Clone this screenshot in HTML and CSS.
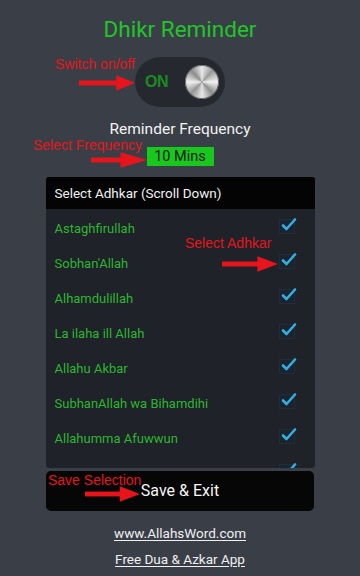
FILE: index.html
```html
<!DOCTYPE html>
<html>
<head>
<meta charset="utf-8">
<link rel="stylesheet" href="styles.css">
</head>
<body>
<div class="screen">
  <h1 class="title">Dhikr Reminder</h1>
  <div class="toggle">
    <span class="toggle-on">ON</span>
    <span class="knob"></span>
  </div>
  <div class="freq-label">Reminder Frequency</div>
  <div class="freq-value">10 Mins</div>
  <div class="panel">
    <div class="panel-head">Select Adhkar (Scroll Down)</div>
    <div class="list">
      <div class="row"><span>Astaghfirullah</span><i class="cb"><svg viewBox="0 0 18 18"><path d="M4 9.5 L7.5 13 L16 3.5"/></svg></i></div>
      <div class="row"><span>Sobhan'Allah</span><i class="cb"><svg viewBox="0 0 18 18"><path d="M4 9.5 L7.5 13 L16 3.5"/></svg></i></div>
      <div class="row"><span>Alhamdulillah</span><i class="cb"><svg viewBox="0 0 18 18"><path d="M4 9.5 L7.5 13 L16 3.5"/></svg></i></div>
      <div class="row"><span>La ilaha ill Allah</span><i class="cb"><svg viewBox="0 0 18 18"><path d="M4 9.5 L7.5 13 L16 3.5"/></svg></i></div>
      <div class="row"><span>Allahu Akbar</span><i class="cb"><svg viewBox="0 0 18 18"><path d="M4 9.5 L7.5 13 L16 3.5"/></svg></i></div>
      <div class="row"><span>SubhanAllah wa Bihamdihi</span><i class="cb"><svg viewBox="0 0 18 18"><path d="M4 9.5 L7.5 13 L16 3.5"/></svg></i></div>
      <div class="row"><span>Allahumma Afuwwun</span><i class="cb"><svg viewBox="0 0 18 18"><path d="M4 9.5 L7.5 13 L16 3.5"/></svg></i></div>
      <div class="row"><span>Allahumma Salli</span><i class="cb"><svg viewBox="0 0 18 18"><path d="M4 9.5 L7.5 13 L16 3.5"/></svg></i></div>
    </div>
  </div>
  <div class="save">Save &amp; Exit</div>
  <a class="link" href="#">www.AllahsWord.com</a>
  <a class="link link2" href="#">Free Dua &amp; Azkar App</a>

  <div class="note note1">Switch on/off</div>
  <svg class="arrow arrow1" viewBox="0 0 57 16"><rect x="0" y="5.5" width="40" height="5"/><polygon points="38,0 57,8 38,16"/></svg>
  <div class="note note2">Select Frequency</div>
  <svg class="arrow arrow2" viewBox="0 0 57 16"><rect x="0" y="5.5" width="32" height="5"/><polygon points="30,0 57,8 30,16"/></svg>
  <div class="note note3">Select Adhkar</div>
  <svg class="arrow arrow3" viewBox="0 0 57 16"><rect x="0" y="5.5" width="38" height="5"/><polygon points="36,0 57,8 36,16"/></svg>
  <div class="note note4">Save Selection</div>
  <svg class="arrow arrow4" viewBox="0 0 57 16"><rect x="0" y="5.5" width="38" height="5"/><polygon points="36,0 57,8 36,16"/></svg>
</div>
</body>
</html>
```
FILE: styles.css
```css
html, body {
  margin: 0;
  padding: 0;
  background: #3a3f47;
}
.screen {
  position: relative;
  width: 360px;
  height: 576px;
  overflow: hidden;
  display: flex;
  flex-direction: column;
  align-items: center;
  font-family: Roboto, "Liberation Sans", sans-serif;
}
.title {
  margin: 16px 0 0;
  font-size: 22.5px;
  font-weight: 400;
  line-height: 26px;
  color: #22c42a;
}
.toggle {
  margin-top: 15px;
  width: 90px;
  height: 50px;
  border-radius: 25px;
  background: #25282e;
  display: flex;
  align-items: center;
  justify-content: space-between;
  padding: 0 6px 0 10px;
  box-sizing: border-box;
}
.toggle-on {
  font-family: "Liberation Sans", Arial, sans-serif;
  font-weight: 700;
  font-size: 16px;
  color: #1c8a22;
  letter-spacing: -0.5px;
}
.knob {
  width: 34px;
  height: 34px;
  border-radius: 50%;
  background:
    radial-gradient(circle at 50% 50%, rgba(255,255,255,0.15) 0 2px, transparent 3px),
    conic-gradient(from 0deg, #e8e8e8, #9a9a9a 12%, #f2f2f2 25%, #8e8e8e 38%, #e6e6e6 50%, #959595 62%, #f0f0f0 75%, #8c8c8c 88%, #e8e8e8);
  box-shadow: 0 0 0 1px #6d6d6d inset;
}
.freq-label {
  margin-top: 12px;
  font-size: 15.5px;
  line-height: 20px;
  color: #f2f2f2;
}
.freq-value {
  margin-top: 8px;
  width: 67px;
  height: 19px;
  background: #18c81d;
  color: #161616;
  font-size: 14.5px;
  line-height: 19px;
  text-align: center;
}
.panel {
  margin-top: 11px;
  width: 269px;
  height: 291px;
  background: #1f2228;
  border-radius: 3px;
  overflow: hidden;
  display: flex;
  flex-direction: column;
}
.panel-head {
  flex: none;
  height: 32px;
  line-height: 32px;
  background: #040404;
  color: #f0f0f0;
  font-size: 13.5px;
  padding-left: 9px;
}
.list {
  flex: 1;
  overflow: hidden;
}
.row {
  height: 35px;
  display: flex;
  align-items: center;
  justify-content: space-between;
  padding: 0 20px 0 9px;
}
.row span {
  color: #2db532;
  font-size: 13px;
  padding-top: 3px;
}
.cb {
  position: relative;
  width: 14px;
  height: 13px;
  background: #1a2430;
  border: 1px solid #222d38;
}
.cb svg {
  position: absolute;
  left: -1px;
  top: -4px;
  width: 18px;
  height: 18px;
  fill: none;
  stroke: #34ade0;
  stroke-width: 2.6;
  stroke-linecap: round;
  stroke-linejoin: round;
}
.save {
  margin-top: 3px;
  width: 268px;
  height: 40px;
  background: #060606;
  border-radius: 5px;
  color: #f5f5f5;
  font-size: 16px;
  line-height: 40px;
  text-align: center;
}
.link {
  margin-top: 14px;
  color: #f0f0f0;
  font-size: 13.5px;
  line-height: 16px;
  text-decoration: underline;
  text-underline-offset: 2px;
}
.link2 {
  margin-top: 10px;
}
.note {
  position: absolute;
  font-family: "Liberation Sans", Arial, sans-serif;
  font-size: 14px;
  line-height: 16px;
  color: #e3161c;
  white-space: nowrap;
}
.note1 { left: 55px; top: 56px; }
.note2 { left: 33px; top: 137px; }
.note3 { left: 185px; top: 235px; }
.note4 { left: 48px; top: 473px; line-height: 14px; }
.arrow {
  position: absolute;
  fill: #e8141c;
  height: 16px;
}
.arrow1 { left: 79px; top: 75px; width: 56px; }
.arrow2 { left: 91px; top: 152px; width: 56px; }
.arrow3 { left: 222px; top: 256px; width: 56px; }
.arrow4 { left: 85px; top: 486px; width: 55px; }
```
